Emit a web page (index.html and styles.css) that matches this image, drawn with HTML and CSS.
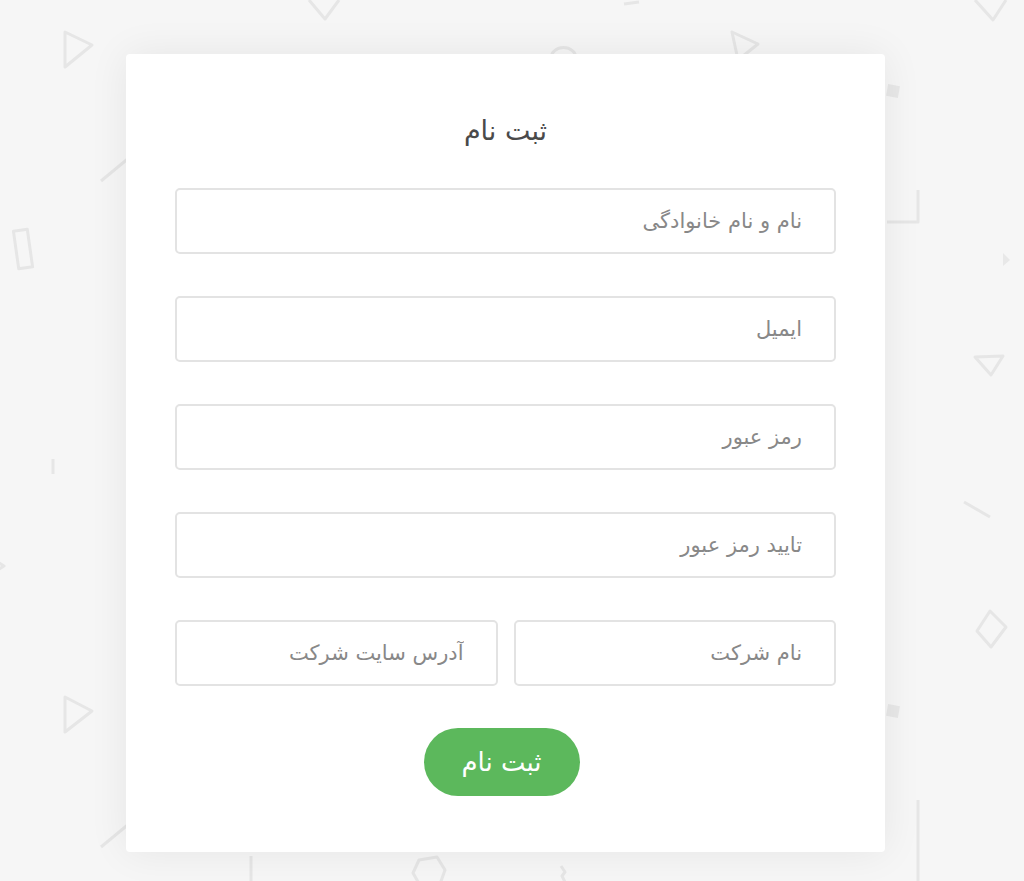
FILE: index.html
```html
<!DOCTYPE html>
<html lang="fa" dir="rtl">
<head>
  <meta charset="utf-8">
  <title>ثبت نام</title>
  <link rel="stylesheet" href="styles.css">
</head>
<body>
  <svg class="bg-shapes" width="1024" height="881" viewBox="0 0 1024 881" aria-hidden="true">
    <g fill="none" stroke="#e6e6e6" stroke-width="3" stroke-linejoin="round">
      <!-- left side -->
      <path d="M65 32 L92 45 L65 67 Z" />
      <line x1="101" y1="181" x2="130" y2="157" />
      <rect x="16" y="230" width="14" height="38" transform="rotate(-8 23 249)" />
      <line x1="53" y1="459" x2="53" y2="474" />
      <path d="M-6 560 L4 566 L-6 572" />
      <path d="M65 697 L92 711 L65 732 Z" />
      <line x1="101" y1="847" x2="130" y2="823" />
      <!-- top -->
      <path d="M309 0 L325 19 L339 0" />
      <line x1="624" y1="4" x2="639" y2="2" />
      <path d="M551 58 A12 10 0 0 1 576 58" />
      <path d="M732 32 L758 44 L738 60 Z" />
      <path d="M975 0 L993 20 L1006 0" />
      <!-- right side -->
      <path d="M887 222 L918 222 L918 190" />
      <path d="M975 357 L1003 356 L991 375 Z" />
      <line x1="964" y1="502" x2="990" y2="517" />
      <path d="M990 611 L1006 627 L991 647 L977 631 Z" />
      <line x1="918" y1="800" x2="918" y2="881" />
      <!-- bottom -->
      <line x1="251" y1="856" x2="251" y2="881" />
      <path d="M419 860 L437 857 L445 870 L440 884 L421 887 L413 873 Z" />
      <path d="M561 866 L565 872 L562 876 L566 884" />
    </g>
    <g fill="#e8e8e8">
      <rect x="887" y="85" width="12" height="12" transform="rotate(10 893 91)" />
      <rect x="887" y="705" width="12" height="12" transform="rotate(10 893 711)" />
      <path d="M1003 253 L1010 260 L1003 266 Z" />
    </g>
  </svg>

  <div class="page">
    <div class="card">
      <h1 class="card-title">ثبت نام</h1>
      <form class="signup-form">
        <input type="text" class="field" placeholder="نام و نام خانوادگی">
        <input type="email" class="field" placeholder="ایمیل">
        <input type="password" class="field" placeholder="رمز عبور">
        <input type="password" class="field" placeholder="تایید رمز عبور">
        <div class="field-row">
          <input type="text" class="field" placeholder="نام شرکت">
          <input type="text" class="field" placeholder="آدرس سایت شرکت">
        </div>
        <div class="actions">
          <button type="button" class="submit-btn">ثبت نام</button>
        </div>
      </form>
    </div>
  </div>
</body>
</html>
```

FILE: styles.css
```css
body {
  margin: 0;
  min-height: 881px;
  background-color: #f6f6f6;
  font-family: "DejaVu Sans", "Noto Sans", sans-serif;
  color: #4a4a4a;
  overflow: hidden;
}

.bg-shapes {
  position: absolute;
  top: 0;
  left: 0;
}

.page {
  position: relative;
  z-index: 1;
  direction: ltr;
  padding: 54px 0 0 126px;
}

.card {
  direction: rtl;
  width: 759px;
  box-sizing: border-box;
  padding: 62px 49px 56px;
  background: #fff;
  border-radius: 4px;
  box-shadow: 0 0 40px rgba(0, 0, 0, 0.07);
}

.card-title {
  margin: 0 0 42px 0;
  font-size: 27px;
  font-weight: normal;
  line-height: 30px;
  text-align: center;
  color: #4a4a4a;
}

.signup-form {
  display: flex;
  flex-direction: column;
  gap: 42px;
}

.field {
  display: block;
  width: 100%;
  height: 66px;
  box-sizing: border-box;
  padding: 0 32px;
  border: 2px solid #e3e3e3;
  border-radius: 5px;
  background: #fff;
  font-family: inherit;
  font-size: 21px;
  color: #555;
  text-align: right;
  direction: rtl;
}

.field::placeholder {
  color: #888;
}

.field:focus {
  outline: none;
  border-color: #cfcfcf;
}

.field-row {
  display: grid;
  grid-template-columns: 1fr 1fr;
  gap: 16px;
}

.actions {
  display: flex;
  justify-content: center;
  padding-right: 8px;
}

.submit-btn {
  width: 156px;
  height: 68px;
  border: none;
  border-radius: 34px;
  background-color: #5cb85c;
  color: #fff;
  font-family: inherit;
  font-size: 26px;
  font-weight: normal;
  cursor: pointer;
}

.submit-btn:hover {
  background-color: #52ab52;
}
```
